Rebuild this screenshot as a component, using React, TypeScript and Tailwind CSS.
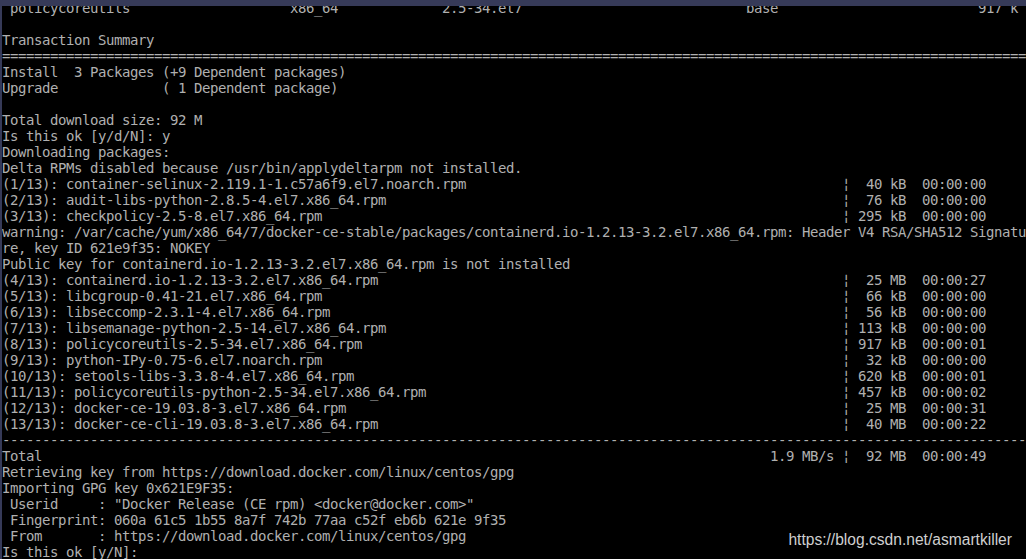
import React from "react";

const pad = (s: string, n: number) => s + " ".repeat(Math.max(0, n - s.length));

const DOWNLOADS = [
  ["(1/13): container-selinux-2.119.1-1.c57a6f9.el7.noarch.rpm", "40", "kB", "00:00:00"],
  ["(2/13): audit-libs-python-2.8.5-4.el7.x86_64.rpm", "76", "kB", "00:00:00"],
  ["(3/13): checkpolicy-2.5-8.el7.x86_64.rpm", "295", "kB", "00:00:00"],
];

const DOWNLOADS_2 = [
  ["(4/13): containerd.io-1.2.13-3.2.el7.x86_64.rpm", "25", "MB", "00:00:27"],
  ["(5/13): libcgroup-0.41-21.el7.x86_64.rpm", "66", "kB", "00:00:00"],
  ["(6/13): libseccomp-2.3.1-4.el7.x86_64.rpm", "56", "kB", "00:00:00"],
  ["(7/13): libsemanage-python-2.5-14.el7.x86_64.rpm", "113", "kB", "00:00:00"],
  ["(8/13): policycoreutils-2.5-34.el7.x86_64.rpm", "917", "kB", "00:00:01"],
  ["(9/13): python-IPy-0.75-6.el7.noarch.rpm", "32", "kB", "00:00:00"],
  ["(10/13): setools-libs-3.3.8-4.el7.x86_64.rpm", "620", "kB", "00:00:01"],
  ["(11/13): policycoreutils-python-2.5-34.el7.x86_64.rpm", "457", "kB", "00:00:02"],
  ["(12/13): docker-ce-19.03.8-3.el7.x86_64.rpm", "25", "MB", "00:00:31"],
  ["(13/13): docker-ce-cli-19.03.8-3.el7.x86_64.rpm", "40", "MB", "00:00:22"],
];

const row = (r: string[]) => pad(r[0], 105) + "¦ " + r[1].padStart(3) + " " + r[2] + "  " + r[3];

const LINES: string[] = [
  pad(pad(pad(pad(" policycoreutils", 36) + "x86_64", 55) + "2.5-34.el7", 93) + "base", 122) + "917 k",
  "",
  "Transaction Summary",
  "=".repeat(128),
  "Install  3 Packages (+9 Dependent packages)",
  "Upgrade             ( 1 Dependent package)",
  "",
  "Total download size: 92 M",
  "Is this ok [y/d/N]: y",
  "Downloading packages:",
  "Delta RPMs disabled because /usr/bin/applydeltarpm not installed.",
  ...DOWNLOADS.map(row),
  "warning: /var/cache/yum/x86_64/7/docker-ce-stable/packages/containerd.io-1.2.13-3.2.el7.x86_64.rpm: Header V4 RSA/SHA512 Signatu",
  "re, key ID 621e9f35: NOKEY",
  "Public key for containerd.io-1.2.13-3.2.el7.x86_64.rpm is not installed",
  ...DOWNLOADS_2.map(row),
  "-".repeat(128),
  pad("Total", 96) + "1.9 MB/s ¦  92 MB  00:00:49",
  "Retrieving key from https://download.docker.com/linux/centos/gpg",
  "Importing GPG key 0x621E9F35:",
  ' Userid     : "Docker Release (CE rpm) <docker@docker.com>"',
  " Fingerprint: 060a 61c5 1b55 8a7f 742b 77aa c52f eb6b 621e 9f35",
  " From       : https://download.docker.com/linux/centos/gpg",
  "Is this ok [y/N]:",
];

export default function App() {
  return (
    <div className="relative flex h-[559px] w-[1026px] flex-col overflow-hidden bg-black">
      {/* window frame top */}
      <div className="relative z-10 h-[6px] shrink-0 bg-[#363a58]" />
      <div className="flex min-h-0 flex-1 border-l-2 border-[#363a58]">
        <div className="-mt-[6px] w-full overflow-hidden whitespace-pre font-['DejaVu_Sans_Mono',monospace] text-[14px] leading-[16px] tracking-[-0.4287px] text-[#b0b0b0]">
          {LINES.map((l, i) => (
            <div key={i} className="h-[16px]">
              {l}
            </div>
          ))}
        </div>
      </div>
      {/* watermark */}
      <div className="absolute right-[14px] top-[531px] font-['Liberation_Sans',Arial,sans-serif] text-[15.6px] leading-[18px] text-[#cfcfcf]">
        https://blog.csdn.net/asmartkiller
      </div>
    </div>
  );
}
